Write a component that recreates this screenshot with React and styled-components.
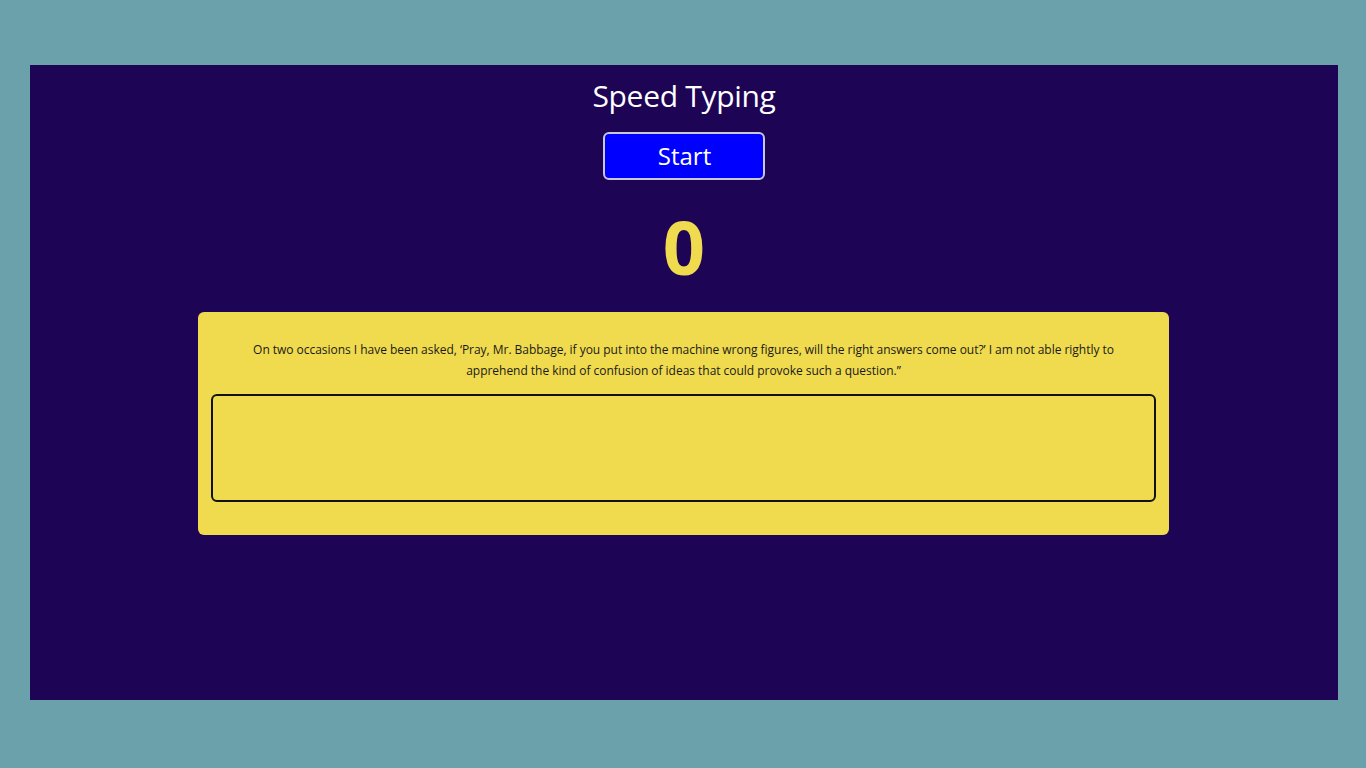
import React from "react";
import styled, { createGlobalStyle } from "styled-components";

const Global = createGlobalStyle`
  html, body { margin: 0; padding: 0; background: #6aa1ab; }
  body { font-family: "Open Sans", "Liberation Sans", sans-serif; }
`;

const Page = styled.div`
  padding: 65px 28px 68px 30px;
`;

const Panel = styled.main`
  background: #1e0455;
  height: 635px;
  display: flex;
  flex-direction: column;
  align-items: center;
`;

const Title = styled.h1`
  margin: 14px 0 0;
  color: #ffffff;
  font-family: "Open Sans", sans-serif;
  font-weight: 400;
  font-size: 30px;
  line-height: 34px;
  letter-spacing: -0.3px;
`;

const StartButton = styled.button`
  margin-top: 19px;
  width: 162px;
  height: 48px;
  background: #0000ff;
  color: #ffffff;
  border: 2px solid #c8c8d8;
  border-radius: 6px;
  font-family: "Open Sans", sans-serif;
  font-size: 24px;
  line-height: 1;
  padding: 0 0 0 1px;
  cursor: pointer;
`;

const Counter = styled.div`
  margin-top: 17px;
  color: #f0da4e;
  font-family: "Open Sans", sans-serif;
  font-weight: 700;
  font-size: 74px;
  line-height: 100px;
`;

const Card = styled.section`
  margin-top: 15px;
  margin-left: -1px;
  width: 971px;
  height: 223px;
  box-sizing: border-box;
  background: #f0da4e;
  border-radius: 6px;
  padding: 27px 13px 0;
  display: flex;
  flex-direction: column;
  align-items: stretch;
`;

const Quote = styled.p`
  margin: 0 0 13px;
  text-align: center;
  color: #1a1a1a;
  font-family: "Open Sans", sans-serif;
  font-size: 12px;
  line-height: 21px;
  letter-spacing: -0.03px;
`;

const Input = styled.textarea`
  box-sizing: border-box;
  width: 100%;
  height: 108px;
  background: transparent;
  border: 2px solid #111111;
  border-radius: 6px;
  resize: none;
  outline: none;
  font-family: "Open Sans", sans-serif;
  font-size: 14px;
  padding: 8px;
`;

export default function App() {
  return (
    <>
      <Global />
      <Page>
        <Panel>
          <Title>Speed Typing</Title>
          <StartButton>Start</StartButton>
          <Counter>0</Counter>
          <Card>
            <Quote>
              On two occasions I have been asked, ‘Pray, Mr. Babbage, if you put into the machine wrong figures, will the right answers come out?’ I am not able rightly to
              <br />
              apprehend the kind of confusion of ideas that could provoke such a question.”
            </Quote>
            <Input />
          </Card>
        </Panel>
      </Page>
    </>
  );
}
